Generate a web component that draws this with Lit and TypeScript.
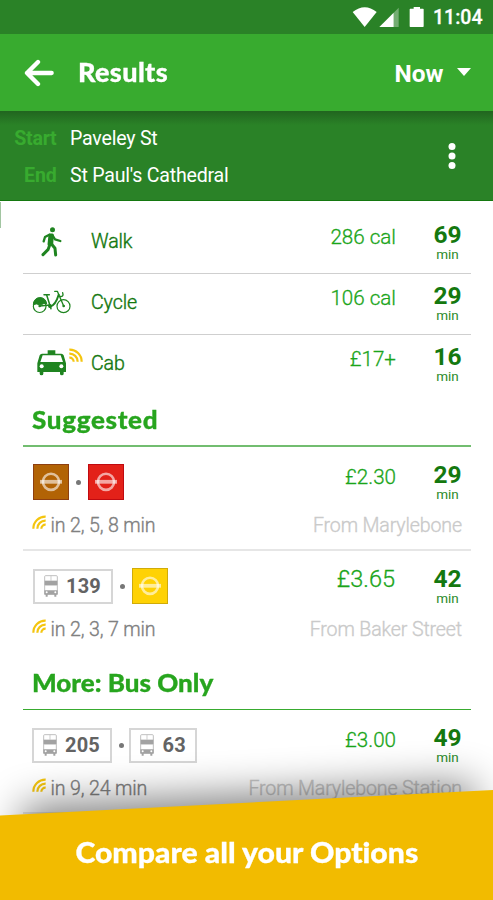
import { LitElement, html, svg, css, nothing } from "lit";
import { customElement, property } from "lit/decorators.js";

const walkIcon = html`<svg class="walk" width="40" height="34" viewBox="96 30 120 102" fill="none" stroke="#1f8420" stroke-linecap="round" stroke-linejoin="round">
  <circle cx="157.500" cy="44.500" r="7.500" fill="#1f8420" stroke="none" />
  <path d="M150 60L157 60L155 88L147 88Z" stroke-width="9" fill="#1f8420" />
  <path d="M148 59L135 66L131 79M158 62L165 73L181 78" stroke-width="7" />
  <path d="M150 88L144 104L129 119M155 88L165 100L167 120" stroke-width="9" />
</svg>`;

const cycleIcon = html`<svg width="40" height="26" viewBox="94 218 120 78" fill="none" stroke="#1f8420" stroke-linecap="round" stroke-linejoin="round">
  <circle cx="117" cy="269.500" r="19" stroke-width="3.600" />
  <circle cx="188.500" cy="269.500" r="19.500" stroke-width="3.600" />
  <path d="M98 264A20 20 0 0 1 138 263L130 261L121 266L108 263Z" fill="#1f8420" stroke-width="3" />
  <path d="M130 235H146" stroke-width="4.500" />
  <path d="M138 236L151 277M117 269L148 266" stroke-width="4.500" />
  <path d="M148 271C160 268 168 255 174 235" stroke-width="6" />
  <path d="M162 225H170L189 269M176 240C186 242 189 238 186 229" stroke-width="4" />
  <circle cx="117" cy="269" r="4" fill="#1f8420" stroke="none" />
  <circle cx="189" cy="269" r="4" fill="#1f8420" stroke="none" />
  <circle cx="148" cy="269" r="6" fill="#1f8420" stroke="none" />
</svg>`;

const cabIcon = html`<svg width="40" height="28" viewBox="95 401 120 84" fill="#1f8420">
  <path fill-rule="evenodd" d="M142 405H165V415H183Q188 415 190 420L197 444V470H190V475Q190 480 184.500 480T179 475V470H129V475Q129 480 123.500 480T118 475V470H111V444L118 420Q120 415 125 415H142ZM127 420L120 440H188L181 420Z" />
  <circle cx="124" cy="453" r="6" fill="#fff" /><circle cx="183" cy="453" r="6" fill="#fff" />
</svg>`;

const live = (cls: string) => html`<svg class=${cls} width="14" height="14" viewBox="0 0 42 42" fill="none" stroke="#f4c50f" stroke-width="6.500">
  <path d="M4 41A36 36 0 0 1 41 5M16 41A24 24 0 0 1 41 17M28 41A12 12 0 0 1 41 29" />
</svg>`;

const busIcon = html`<svg width="14" height="22" viewBox="0 0 42 66">
  <path d="M5 2H37Q40 2 40 5V57H2V5Q2 2 5 2Z" fill="#fff" stroke="#b3b3b3" stroke-width="2.500" />
  <path d="M21 2V17M2 31H40" stroke="#c4c4c4" stroke-width="2.500" />
  <path d="M2 17H40V30H2Z" fill="#a2a2a2" />
  <path d="M1 46H41V59H37V65H31V59H11V65H5V59H1Z" fill="#a2a2a2" />
  <circle cx="8" cy="52" r="3" fill="#fff" /><circle cx="34" cy="52" r="3" fill="#fff" />
</svg>`;

const roundel = svg`<circle cx="18" cy="17.800" r="8.100" fill="none" stroke="#fff" stroke-opacity=".6" stroke-width="2.600" /><path d="M7 15.900H29V19.700H7Z" fill="#fff" fill-opacity=".6"/>`;

type Leg = { line?: string; edge?: string; bus?: string };

@customElement("leg-badge")
class LegBadge extends LitElement {
  @property({ attribute: false }) leg: Leg = {};
  static styles = css`
    :host { display: block; }
    .bus { box-sizing: border-box; height: 35px; border: 2px solid #d6d6d6;
      display: flex; align-items: center; gap: 8.500px; padding: 0 9.500px 0 9px; background: #fff;
      font: 700 20px/32px Roboto, sans-serif; color: #636363; letter-spacing: .2px; }
    .bus svg { flex: none; }
    .tube { display: block; }
  `;
  render() {
    const { line, edge, bus } = this.leg;
    return bus
      ? html`<div class="bus">${busIcon}<span>${bus}</span></div>`
      : html`<svg class="tube" width="36" height="36" viewBox="0 0 36 36">
          <rect x=".5" y=".5" width="35" height="35" fill=${line ?? ""} stroke=${edge ?? ""} />${roundel}</svg>`;
  }
}

@customElement("trip-time")
class TripTime extends LitElement {
  @property() price = "";
  @property() mins = "";
  @property({ type: Boolean }) large = false;
  static styles = css`
    :host { display: flex; font-family: Roboto, sans-serif; }
    .price { box-sizing: border-box; padding-top: 1.500px; width: 110px; text-align: right; font-size: 20.600px; line-height: 24px; color: #1aa51a; font-weight: 300; -webkit-text-stroke: .3px #1aa51a; }
    .big { font-size: 23.500px; padding: 0 1px 0 0; }
    .time { width: 75px; margin-left: 14px; text-align: center; }
    .num { font-size: 24.500px; line-height: 24px; font-weight: 700; color: #14780f; }
    .unit { font-size: 13.500px; line-height: 14px; color: #2a8a27; }
  `;
  render() {
    return html`<div class="price ${this.large ? "big" : ""}">${this.price}</div>
      <div class="time"><div class="num">${this.mins}</div><div class="unit">min</div></div>`;
  }
}

const modes = [
  { icon: walkIcon, name: "Walk", price: "286 cal", mins: "69", live: false },
  { icon: cycleIcon, name: "Cycle", price: "106 cal", mins: "29", live: false },
  { icon: cabIcon, name: "Cab", price: "£17+", mins: "16", live: true },
];

const brown: Leg = { line: "#b26305", edge: "#8e3f10" };
const red: Leg = { line: "#e32119", edge: "#c00a10" };
const yellow: Leg = { line: "#ffd204", edge: "#d0ab08" };

@customElement("app-root")
class AppRoot extends LitElement {
  static styles = css`
    :host { display: block; position: relative; height: 900px; overflow: hidden; background: #fff; font-family: Roboto, sans-serif; }
    svg { display: block; flex: none; }
    .soft { font-family: Lato, sans-serif; font-weight: 900; white-space: nowrap; font-variant-ligatures: none; -webkit-text-stroke: .3px currentColor; }
    .soft span { display: inline-block; transform-origin: 0 50%; transform: scaleX(1.04); }
    .status { height: 34px; background: #2a8227; display: flex; justify-content: flex-end; padding-right: 10.500px; gap: 8.500px; box-sizing: border-box; }
    .status svg { margin-top: 6px; }
    .clock { font-size: 19.500px; line-height: 35px; font-weight: 500; color: #fff; -webkit-text-stroke: .3px #fff; }
    .bar { height: 77px; background: #38ab2f; display: flex; align-items: center; padding: 0 22.500px 0 24px; box-sizing: border-box; color: #fff; }
    .title { margin-left: 23.500px; flex: 1; font-size: 26px; line-height: 77px; letter-spacing: .35px; }
    .now { font-size: 24.400px; font-weight: 700; line-height: 77px; padding-top: 1.500px; }
    .caret { margin-left: 13px; border: 7px solid transparent; border-top: 8px solid #fff; border-bottom: 0; margin-bottom: 2px; }
    .route { height: 90px; box-sizing: border-box; background: linear-gradient(rgba(20,60,20,.42), rgba(20,60,20,0) 14px), #2a8227; border-bottom: 1px solid #14780f;
      display: flex; align-items: center; justify-content: space-between; padding-right: 37px; }
    .stops { display: grid; grid-template-columns: 56.500px auto; column-gap: 13.500px; font-size: 19.600px; letter-spacing: -.22px; line-height: 37px; color: #fff; padding-top: 3px; }
    .key { text-align: right; font-weight: 700; color: #38ab2f; }
    .list { padding: 12px 22px 0 22.500px; }
    .mode { height: 61px; box-sizing: border-box; display: flex; border-bottom: 1px solid #cfcfcf; padding-top: 10px; padding-left: 9px; }
    .mode.last { border-color: transparent; }
    .icon { width: 59.500px; position: relative; height: 35px; display: flex; align-items: center; }
    .walk { margin-top: 3px; }
    .rays { position: absolute; left: 37px; top: 3px; transform: scaleX(-1); }
    .name { font-size: 19.600px; letter-spacing: -.1px; line-height: 24px; padding-top: 7px; flex: 1; color: #14780f; font-weight: 300; -webkit-text-stroke: .4px #14780f; }
    trip-time { margin-right: -14px; }
    .head { height: 51px; box-sizing: border-box; border-bottom: 2px solid #72bd70; color: #27a51e; font-size: 25px; letter-spacing: .65px; line-height: 30px; padding: 8px 0 0 9.500px; }
    .head.more { height: 56px; padding-top: 13px; border-bottom: 1px solid #38ab2f; letter-spacing: 0; }
    .trip { height: 104px; box-sizing: border-box; border-bottom: 2px solid #e6e6e6; padding: 16px 0 0 10px; }
    .trip.second { height: 103px; border-color: transparent; }
    .top { display: flex; justify-content: space-between; height: 50.500px; }
    .legs { display: flex; align-items: center; height: 38px; }
    .dot { width: 5px; height: 5px; border-radius: 50%; background: #777; margin: 0 7px; }
    .buses .legs { margin-left: -1px; }
    .buses .dot { margin-right: 5.500px; }
    .info { display: flex; font-size: 19.600px; letter-spacing: -.14px; line-height: 24px; color: #808080; font-weight: 300; -webkit-text-stroke: .35px currentColor; padding-right: 9px; margin-left: -1px; }
    .info svg { margin: 1.500px 5px 0 0; }
    .from { margin-left: auto; color: #cacaca; }
    .edge { position: absolute; left: 0; top: 202px; width: 1px; height: 26px; background: #a2c5a1; }
    .promo { position: absolute; left: 0; right: 0; bottom: 0; height: 180px; }
    .promo svg { position: absolute; inset: 0; }
    .promo .text { position: absolute; left: 0; right: 0; bottom: 28px; text-align: center; color: #fff; font-size: 29px; line-height: 40px; }
    .promo .text span { transform-origin: 50% 50%; }
  `;

  trip(legs: Leg[], when: string, from: string, price: string, mins: string, cls = "", large = false) {
    return html`<div class="trip ${cls}">
      <div class="top">
        <div class="legs">${legs.map((leg, i) => html`${i ? html`<i class="dot"></i>` : nothing}<leg-badge .leg=${leg}></leg-badge>`)}</div>
        <trip-time price=${price} mins=${mins} ?large=${large}></trip-time>
      </div>
      <div class="info">${live("")}<span>${when}</span><span class="from">${from}</span></div>
    </div>`;
  }

  render() {
    return html`
      <div class="status">
        <svg width="73" height="22" viewBox="328 18 219 66" fill="#fff">
          <path d="M330 36Q366 7 402 36L366 81Z" />
          <path d="M410 81L453 38V81Z" /><path d="M453 38L468 23V81H453Z" opacity=".35" />
          <path d="M503 26H513V21H532V26H541Q543 26 543 28V79Q543 81 541 81H503Q501 81 501 79V28Q501 26 503 26Z" />
        </svg>
        <span class="clock">11:04</span>
      </div>
      <div class="bar">
        <svg width="30" height="28" viewBox="72 177 90 84" fill="none" stroke="#fff" stroke-width="13" stroke-linecap="round" stroke-linejoin="round"><path d="M155 219H81M114 186L81 219L114 252" /></svg>
        <div class="title soft"><span>Results</span></div><span class="now">Now</span><span class="caret"></span>
      </div>
      <div class="route">
        <div class="stops"><span class="key">Start</span><span>Paveley St</span><span class="key">End</span><span>St Paul's Cathedral</span></div>
        <svg width="8" height="28" viewBox="0 0 8 28" fill="#fff"><circle cx="4" cy="4.500" r="3.500" /><circle cx="4" cy="14" r="3.500" /><circle cx="4" cy="23.500" r="3.500" /></svg>
      </div>
      <div class="list">
        ${modes.map((m, i) => html`<div class="mode ${i === 2 ? "last" : ""}">
          <div class="icon">${m.icon}${m.live ? live("rays") : nothing}</div>
          <span class="name">${m.name}</span>
          <trip-time price=${m.price} mins=${m.mins}></trip-time>
        </div>`)}
        <div class="head soft"><span>Suggested</span></div>
        ${this.trip([brown, red], "in 2, 5, 8 min", "From Marylebone", "£2.30", "29")}
        ${this.trip([{ bus: "139" }, yellow], "in 2, 3, 7 min", "From Baker Street", "£3.65", "42", "second", true)}
        <div class="head more soft"><span>More: Bus Only</span></div>
        ${this.trip([{ bus: "205" }, { bus: "63" }], "in 9, 24 min", "From Marylebone Station", "£3.00", "49", "buses")}
      </div>
      <div class="edge"></div>
      <div class="promo">
        <svg width="493" height="180" viewBox="0 0 493 180">
          <defs><filter id="s" x="-20%" y="-60%" width="140%" height="220%"><feGaussianBlur stdDeviation="20" /></filter></defs>
          <path d="M22 86L474 63V220H22Z" fill="#000" opacity=".5" filter="url(#s)" />
          <path d="M0 95.500L493 70V180H0Z" fill="#f2bb00" />
        </svg>
        <div class="text soft"><span>Compare all your Options</span></div>
      </div>`;
  }
}
